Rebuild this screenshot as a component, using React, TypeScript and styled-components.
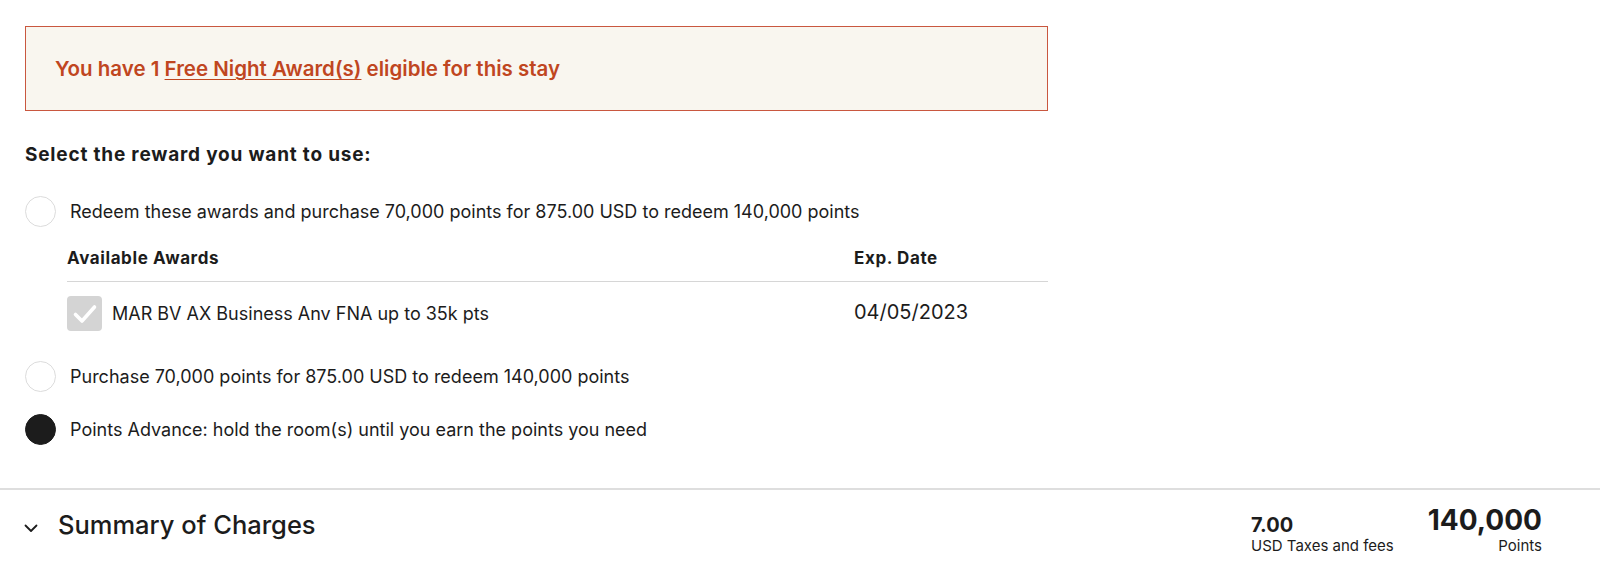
import React from "react";
import styled, { createGlobalStyle } from "styled-components";

const Global = createGlobalStyle`
  html, body { margin: 0; padding: 0; background: #fff; }
  body { font-family: Inter, "Open Sans", Arial, sans-serif; color: #1c1c1c; }
  * { box-sizing: border-box; }
`;

const Page = styled.div`
  width: 1600px;
  display: flex;
  flex-direction: column;
`;

const Main = styled.section`
  width: 1048px;
  padding: 26px 0 0 25px;
  display: flex;
  flex-direction: column;
`;

const Banner = styled.div`
  height: 85px;
  border: 1px solid #c9573f;
  background: #f9f6ef;
  display: flex;
  align-items: center;
  padding-left: 29px;
  color: #c0461f;
  font-size: 20.5px;
  font-weight: 600;
`;

const BannerLink = styled.a`
  color: inherit;
  text-decoration: underline;
  text-underline-offset: 3px;
  text-decoration-thickness: 1px;
`;

const Heading = styled.h2`
  margin: 33px 0 0;
  font-size: 19px;
  font-weight: 700;
  letter-spacing: 0.8px;
  line-height: 22px;
`;

const Options = styled.div`
  display: flex;
  flex-direction: column;
  margin-top: 30px;
`;

const OptionRow = styled.label<{ $gap?: number }>`
  display: flex;
  align-items: center;
  gap: 14px;
  font-size: 18px;
  line-height: 30px;
  margin-top: ${(p) => p.$gap ?? 0}px;
`;

const Radio = styled.span<{ $checked?: boolean }>`
  width: 31px;
  height: 31px;
  border-radius: 50%;
  flex: none;
  border: 1.5px solid ${(p) => (p.$checked ? "#1c1c1c" : "#dcdcdc")};
  background: ${(p) => (p.$checked ? "#1c1c1c" : "#fff")};
`;

const AwardsTable = styled.div`
  margin-left: 42px;
  margin-top: 21px;
  display: flex;
  flex-direction: column;
`;

const TableHead = styled.div`
  display: grid;
  grid-template-columns: 787px 1fr;
  font-size: 17px;
  font-weight: 700;
  letter-spacing: 0.6px;
  line-height: 20px;
  padding-bottom: 13px;
  border-bottom: 1.5px solid #d6d6d6;
`;

const TableRow = styled.div`
  display: grid;
  grid-template-columns: 787px 1fr;
  align-items: center;
  padding-top: 14px;
`;

const AwardCell = styled.div`
  display: flex;
  align-items: center;
  gap: 10px;
  font-size: 18px;
`;

const CheckBox = styled.span`
  width: 35px;
  height: 35px;
  border-radius: 4px;
  background: #d4d4d4;
  display: flex;
  align-items: center;
  justify-content: center;
  flex: none;
`;

const DateCell = styled.div`
  font-size: 20px;
  line-height: 24px;
  margin-top: -4px;
`;

const Summary = styled.div`
  margin-top: 43px;
  border-top: 2px solid #dedede;
  height: 97px;
  display: flex;
  align-items: flex-start;
  padding: 19px 58px 0 24px;
`;

const SummaryTitle = styled.div`
  display: flex;
  align-items: center;
  gap: 20px;
  font-size: 25.5px;
  font-weight: 500;
  flex: 1;
  line-height: 30px;
  margin-top: 1px;
`;

const Amount = styled.div<{ $align?: string }>`
  display: flex;
  flex-direction: column;
  align-items: ${(p) => (p.$align === "right" ? "flex-end" : "flex-start")};
`;

const AmountValue = styled.div<{ $big?: boolean }>`
  font-weight: 700;
  font-size: ${(p) => (p.$big ? "28px" : "20px")};
  line-height: ${(p) => (p.$big ? "34px" : "24px")};
  margin-top: ${(p) => (p.$big ? "-6px" : "4px")};
`;

const AmountLabel = styled.div`
  font-size: 15px;
  line-height: 18px;
`;

const Amounts = styled.div`
  display: flex;
  gap: 34px;
`;

export default function App() {
  return (
    <Page>
      <Global />
      <Main>
        <Banner>
          <span>
            You have 1 <BannerLink href="#">Free Night Award(s)</BannerLink> eligible for this stay
          </span>
        </Banner>
        <Heading>Select the reward you want to use:</Heading>
        <Options>
          <OptionRow>
            <Radio />
            Redeem these awards and purchase 70,000 points for 875.00 USD to redeem 140,000 points
          </OptionRow>
          <AwardsTable>
            <TableHead>
              <span>Available Awards</span>
              <span>Exp. Date</span>
            </TableHead>
            <TableRow>
              <AwardCell>
                <CheckBox>
                  <svg width="26" height="22" viewBox="0 0 26 22">
                    <path d="M3.5 11.5 L10 18 L22.5 4" fill="none" stroke="#fff" strokeWidth="3.6" strokeLinecap="round" strokeLinejoin="round" />
                  </svg>
                </CheckBox>
                MAR BV AX Business Anv FNA up to 35k pts
              </AwardCell>
              <DateCell>04/05/2023</DateCell>
            </TableRow>
          </AwardsTable>
          <OptionRow $gap={30}>
            <Radio />
            Purchase 70,000 points for 875.00 USD to redeem 140,000 points
          </OptionRow>
          <OptionRow $gap={22}>
            <Radio $checked />
            Points Advance: hold the room(s) until you earn the points you need
          </OptionRow>
        </Options>
      </Main>
      <Summary>
        <SummaryTitle>
          <svg width="14" height="9" viewBox="0 0 14 9" style={{ marginTop: 6 }}>
            <path d="M1.5 1.5 L7 7 L12.5 1.5" fill="none" stroke="#1c1c1c" strokeWidth="1.8" strokeLinecap="round" strokeLinejoin="round" />
          </svg>
          Summary of Charges
        </SummaryTitle>
        <Amounts>
          <Amount>
            <AmountValue>7.00</AmountValue>
            <AmountLabel>USD Taxes and fees</AmountLabel>
          </Amount>
          <Amount $align="right">
            <AmountValue $big>140,000</AmountValue>
            <AmountLabel>Points</AmountLabel>
          </Amount>
        </Amounts>
      </Summary>
    </Page>
  );
}
